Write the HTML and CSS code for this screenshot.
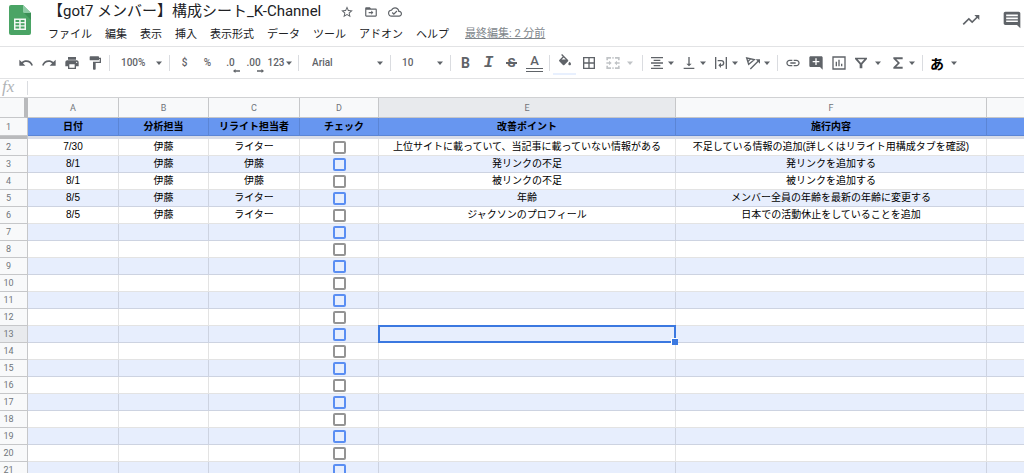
FILE: index.html
```html
<!DOCTYPE html>
<html lang="ja">
<head>
<meta charset="utf-8">
<meta name="viewport" content="width=device-width, initial-scale=1">
<title>【got7 メンバー】構成シート_K-Channel</title>
<link rel="stylesheet" href="styles.css">
</head>
<body>
<svg class="sprite" aria-hidden="true">
  <symbol id="arrow" viewBox="0 0 8 8"><path d="M1 2.5h6L4 6z"/></symbol>
  <symbol id="undo" viewBox="0 0 24 24"><path d="M12.5 8c-2.65 0-5.05.99-6.9 2.6L2 7v9h9l-3.62-3.62c1.39-1.16 3.16-1.88 5.12-1.88 3.54 0 6.55 2.31 7.6 5.5l2.37-.78C21.08 11.03 17.15 8 12.5 8z"/></symbol>
  <symbol id="redo" viewBox="0 0 24 24"><path d="M18.4 10.6C16.55 8.99 14.15 8 11.5 8c-4.65 0-8.58 3.03-9.96 7.22L3.9 16c1.05-3.19 4.05-5.5 7.6-5.5 1.95 0 3.73.72 5.12 1.88L13 16h9V7l-3.6 3.6z"/></symbol>
  <symbol id="print" viewBox="0 0 24 24"><path d="M19 8H5c-1.66 0-3 1.34-3 3v6h4v4h12v-4h4v-6c0-1.66-1.34-3-3-3zm-3 11H8v-5h8v5zm3-7c-.55 0-1-.45-1-1s.45-1 1-1 1 .45 1 1-.45 1-1 1zm-1-9H6v4h12V3z"/></symbol>
  <symbol id="paint" viewBox="0 0 24 24"><path d="M18 4V3c0-.55-.45-1-1-1H5c-.55 0-1 .45-1 1v4c0 .55.45 1 1 1h12c.55 0 1-.45 1-1V6h1v4H9v11c0 .55.45 1 1 1h2c.55 0 1-.45 1-1v-9h8V4h-3z"/></symbol>
  <symbol id="fill" viewBox="0 0 24 24"><path d="M16.56 8.94 7.62 0 6.21 1.41l2.38 2.38-5.15 5.15c-.59.59-.59 1.54 0 2.12l5.5 5.5c.29.29.68.44 1.06.44s.77-.15 1.06-.44l5.5-5.5c.59-.58.59-1.53 0-2.12zM6.8 8.4 10 5.21 13.200 8.400zM19 11.500s-2 2.170-2 3.500c0 1.100.9 2 2 2s2-.9 2-2c0-1.330-2-3.500-2-3.500z"/></symbol>
  <symbol id="borders" viewBox="0 0 24 24"><path d="M3 3v18h18V3H3zm8 16H5v-6h6v6zm0-8H5V5h6v6zm8 8h-6v-6h6v6zm0-8h-6V5h6v6z"/></symbol>
  <symbol id="merge" viewBox="0 0 24 24"><path d="M2 3h7v2.500H4.500V8H2zM15 3h7v5h-2.500V5.500H15zM2 16h2.500v2.500H9V21H2zM19.500 16H22v5h-7v-2.500h4.500zM2 11h4V8.500l4 3.500-4 3.500V13H2zM22 11h-4V8.500L14 12l4 3.500V13h4zM11 3h2v2.500h-2zM11 18.500h2V21h-2z"/></symbol>
  <symbol id="center" viewBox="0 0 24 24"><path d="M7 15v2h10v-2H7zm-4 6h18v-2H3v2zm0-8h18v-2H3v2zm4-6v2h10V7H7zM3 3v2h18V3H3z"/></symbol>
  <symbol id="bottom" viewBox="0 0 24 24"><path d="M16 13h-3V3h-2v10H8l4 4 4-4zM4 19v2h16v-2H4z"/></symbol>
  <symbol id="wrap" viewBox="0 0 24 24"><path d="M3 3h2v18H3zM19 3h2v18h-2zM7 7.500h5.500a4.500 4.500 0 0 1 0 9H12V19.500L8 15.500l4-4v3h.5a2.500 2.500 0 0 0 0-5H7z"/></symbol>
  <symbol id="rotate" viewBox="0 0 24 24"><g fill="none" stroke="currentColor" stroke-width="2"><path d="M2.500 4.500 14 7 5.500 14zM8.500 5.500 4.500 10M8 21 20 9"/></g><path d="M16 6.500h6.500V13z"/></symbol>
  <symbol id="link" viewBox="0 0 24 24"><path d="M3.900 12c0-1.710 1.390-3.100 3.100-3.100h4V7H7c-2.760 0-5 2.240-5 5s2.240 5 5 5h4v-1.900H7c-1.710 0-3.100-1.390-3.100-3.100zM8 13h8v-2H8v2zm9-6h-4v1.900h4c1.710 0 3.100 1.390 3.100 3.100s-1.390 3.100-3.100 3.100h-4V17h4c2.760 0 5-2.240 5-5s-2.240-5-5-5z"/></symbol>
  <symbol id="addnote" viewBox="0 0 24 24"><path d="M22 4c0-1.100-.9-2-2-2H4c-1.100 0-2 .9-2 2v12c0 1.100.9 2 2 2h14l4 4V4zm-5 7h-4v4h-2v-4H7V9h4V5h2v4h4v2z"/></symbol>
  <symbol id="chart" viewBox="0 0 24 24"><path fill-rule="evenodd" d="M2 2h20v20H2zm2 2v16h16V4zm3 6h2v7H7zm4-3h2v10h-2zm4 6h2v4h-2z"/></symbol>
  <symbol id="filter" viewBox="0 0 24 24"><path fill-rule="evenodd" d="M3 4h18v2l-7 8v6h-4v-6L3 6zm4 2.500 5 5.500 5-5.500z"/></symbol>
  <symbol id="sum" viewBox="0 0 24 24"><path d="M19 3.500H5v2.300l6.500 6.200L5 18.200v2.300h14v-3H9.500L15 12 9.500 6.500H19z"/></symbol>
  <symbol id="star" viewBox="0 0 24 24"><path d="m22 9.240-7.190-.62L12 2 9.190 8.630 2 9.240l5.460 4.730L5.820 21 12 17.270 18.180 21l-1.630-7.030L22 9.240zM12 15.400l-3.760 2.270 1-4.280-3.320-2.880 4.380-.38L12 6.100l1.710 4.040 4.380.38-3.320 2.880 1 4.280L12 15.400z"/></symbol>
  <symbol id="folder" viewBox="0 0 24 24"><path d="M20 6h-8l-2-2H4c-1.100 0-2 .9-2 2v12c0 1.100.9 2 2 2h16c1.100 0 2-.9 2-2V8c0-1.100-.9-2-2-2zm0 12H4V8h16v10zM12.500 9.500v2.500H8v2h4.500v2.500L16 13z"/></symbol>
  <symbol id="cloud" viewBox="0 0 24 24"><path d="M19.350 10.040A7.490 7.490 0 0 0 12 4C9.110 4 6.600 5.640 5.350 8.040A5.994 5.994 0 0 0 0 14c0 3.310 2.690 6 6 6h13c2.760 0 5-2.240 5-5 0-2.640-2.050-4.780-4.650-4.960zM19 18H6c-2.210 0-4-1.790-4-4 0-2.050 1.530-3.760 3.560-3.970l1.070-.11.500-.95A5.469 5.469 0 0 1 12 6c2.620 0 4.880 1.860 5.390 4.430l.3 1.500 1.530.11A2.980 2.980 0 0 1 22 15c0 1.650-1.350 3-3 3zm-9-3.820-2.090-2.090L6.500 13.500 10 17l6.010-6.010-1.410-1.410z"/></symbol>
  <symbol id="trend" viewBox="0 0 24 24"><path d="m16 6 2.290 2.290-4.880 4.880-4-4L2 16.590 3.410 18l6-6 4 4 6.300-6.290L22 12V6z"/></symbol>
  <symbol id="comments" viewBox="0 0 24 24"><path d="M22 4c0-1.100-.9-2-2-2H4c-1.100 0-2 .9-2 2v12c0 1.100.9 2 2 2h14l4 4V4zm-3 10.500H5v-2h14zm0-3.500H5V9h14zm0-3.500H5v-2h14z"/></symbol>
  <symbol id="left" viewBox="0 0 8 4"><path d="M0 2 2.500 0v1.200H7v1.600H2.500V4z"/></symbol>
  <symbol id="right" viewBox="0 0 8 4"><path d="M8 2 5.500 0v1.200H1v1.600h4.500V4z"/></symbol>
</svg>

<header class="top">
  <a class="logo" href="#" aria-label="スプレッドシート ホーム">
    <svg viewBox="0 0 22 30"><path fill="#4aa465" d="M2 0h12l8 8v20a2 2 0 0 1-2 2H2a2 2 0 0 1-2-2V2a2 2 0 0 1 2-2z"/><path fill="#8ecba5" d="M14 0l8 8h-6.500A1.500 1.500 0 0 1 14 6.500z"/><path fill="#3a8f55" d="M15 8h7v7z"/><path fill="#f2f8f3" fill-rule="evenodd" d="M5 13.500h12v11.500H5zm1.500 1.500v2h3.700v-2zm5.200 0v2h3.800v-2zm-5.200 3.300v2h3.700v-2zm5.200 0v2h3.800v-2zm-5.200 3.300v2h3.700v-2zm5.200 0v2h3.800v-2z"/></svg>
  </a>
  <div class="heading">
    <div class="title-row">
      <h1>【got7 メンバー】構成シート_K-Channel</h1>
      <div class="title-icons">
        <button aria-label="スター"><svg><use href="#star"/></svg></button>
        <button aria-label="移動"><svg><use href="#folder"/></svg></button>
        <button aria-label="ドキュメントのステータス"><svg><use href="#cloud"/></svg></button>
      </div>
    </div>
    <nav class="menus">
      <button>ファイル</button><button>編集</button><button>表示</button><button>挿入</button><button>表示形式</button><button>データ</button><button>ツール</button><button>アドオン</button><button>ヘルプ</button>
      <a href="#">最終編集: 2 分前</a>
    </nav>
  </div>
  <div class="top-right">
    <button aria-label="アクティビティ"><svg class="i20"><use href="#trend"/></svg></button>
    <button aria-label="コメント履歴"><svg class="i20"><use href="#comments"/></svg></button>
  </div>
</header>

<div class="toolbar" role="toolbar" aria-label="ツールバー">
  <button aria-label="元に戻す"><svg><use href="#undo"/></svg></button>
  <button aria-label="やり直し"><svg><use href="#redo"/></svg></button>
  <button aria-label="印刷"><svg><use href="#print"/></svg></button>
  <button aria-label="書式を貼り付け"><svg><use href="#paint"/></svg></button>
  <i class="sep"></i>
  <div class="pick"><select aria-label="ズーム"><option>100%</option></select><svg class="arrow"><use href="#arrow"/></svg></div>
  <i class="sep"></i>
  <button>$</button>
  <button>%</button>
  <button class="decimal" aria-label="小数点以下の桁数を減らす">.0<svg><use href="#left"/></svg></button>
  <button class="decimal" aria-label="小数点以下の桁数を増やす">.00<svg><use href="#right"/></svg></button>
  <button class="formats">123<svg class="arrow"><use href="#arrow"/></svg></button>
  <i class="sep"></i>
  <div class="pick pick-font"><select aria-label="フォント"><option>Arial</option></select><svg class="arrow"><use href="#arrow"/></svg></div>
  <i class="sep"></i>
  <div class="pick"><select aria-label="フォントサイズ"><option>10</option></select><svg class="arrow"><use href="#arrow"/></svg></div>
  <i class="sep"></i>
  <button class="bold" aria-label="太字">B</button>
  <button class="italic" aria-label="斜体">I</button>
  <button class="strike" aria-label="取り消し線">S</button>
  <button class="color" aria-label="テキストの色"><span>A</span></button>
  <i class="sep"></i>
  <button class="fill" aria-label="塗りつぶしの色"><svg><use href="#fill"/></svg></button>
  <button class="border-btn" aria-label="枠線"><svg><use href="#borders"/></svg></button>
  <button class="split wide faded" aria-label="セルを結合"><svg><use href="#merge"/></svg><svg class="arrow"><use href="#arrow"/></svg></button>
  <i class="sep"></i>
  <button class="split" aria-label="水平方向の配置"><svg><use href="#center"/></svg><svg class="arrow"><use href="#arrow"/></svg></button>
  <button class="split" aria-label="垂直方向の配置"><svg><use href="#bottom"/></svg><svg class="arrow"><use href="#arrow"/></svg></button>
  <button class="split" aria-label="テキストを折り返す"><svg><use href="#wrap"/></svg><svg class="arrow"><use href="#arrow"/></svg></button>
  <button class="split" aria-label="テキストの回転"><svg><use href="#rotate"/></svg><svg class="arrow"><use href="#arrow"/></svg></button>
  <i class="sep"></i>
  <button aria-label="リンクを挿入"><svg><use href="#link"/></svg></button>
  <button aria-label="コメントを挿入"><svg><use href="#addnote"/></svg></button>
  <button aria-label="グラフを挿入"><svg><use href="#chart"/></svg></button>
  <button class="split wide" aria-label="フィルタ"><svg><use href="#filter"/></svg><svg class="arrow"><use href="#arrow"/></svg></button>
  <button class="split" aria-label="関数"><svg><use href="#sum"/></svg><svg class="arrow"><use href="#arrow"/></svg></button>
  <i class="sep"></i>
  <button class="split wide ime" aria-label="入力ツール"><span>あ</span><svg class="arrow"><use href="#arrow"/></svg></button>
</div>

<div class="formula">
  <label for="fx">fx</label>
  <input id="fx" type="text">
</div>

<main class="sheet">
<table>
  <colgroup><col class="c-num"><col class="c-a"><col class="c-b"><col class="c-a"><col class="c-d"><col class="c-e"><col class="c-f"><col></colgroup>
  <thead>
    <tr><th class="corner"></th><th>A</th><th>B</th><th>C</th><th>D</th><th class="active">E</th><th>F</th><th></th></tr>
  </thead>
  <tbody>
    <tr class="names"><th>1</th><td>日付</td><td>分析担当</td><td>リライト担当者</td><td>　チェック</td><td>改善ポイント</td><td>施行内容</td><td></td></tr>
    <tr class="freeze"><th></th><td colspan="7"></td></tr>
    <tr><th>2</th><td>7/30</td><td>伊藤</td><td>ライター</td><td><input type="checkbox" aria-label="D2"></td><td>上位サイトに載っていて、当記事に載っていない情報がある</td><td>不足している情報の追加(詳しくはリライト用構成タブを確認)</td><td></td></tr>
    <tr class="band"><th>3</th><td>8/1</td><td>伊藤</td><td>伊藤</td><td><input type="checkbox" aria-label="D3"></td><td>発リンクの不足</td><td>発リンクを追加する</td><td></td></tr>
    <tr><th>4</th><td>8/1</td><td>伊藤</td><td>伊藤</td><td><input type="checkbox" aria-label="D4"></td><td>被リンクの不足</td><td>被リンクを追加する</td><td></td></tr>
    <tr class="band"><th>5</th><td>8/5</td><td>伊藤</td><td>ライター</td><td><input type="checkbox" aria-label="D5"></td><td>年齢</td><td>メンバー全員の年齢を最新の年齢に変更する</td><td></td></tr>
    <tr><th>6</th><td>8/5</td><td>伊藤</td><td>ライター</td><td><input type="checkbox" aria-label="D6"></td><td>ジャクソンのプロフィール</td><td>日本での活動休止をしていることを追加</td><td></td></tr>
    <tr class="band"><th>7</th><td></td><td></td><td></td><td><input type="checkbox" aria-label="D7"></td><td></td><td></td><td></td></tr>
    <tr><th>8</th><td></td><td></td><td></td><td><input type="checkbox" aria-label="D8"></td><td></td><td></td><td></td></tr>
    <tr class="band"><th>9</th><td></td><td></td><td></td><td><input type="checkbox" aria-label="D9"></td><td></td><td></td><td></td></tr>
    <tr><th>10</th><td></td><td></td><td></td><td><input type="checkbox" aria-label="D10"></td><td></td><td></td><td></td></tr>
    <tr class="band"><th>11</th><td></td><td></td><td></td><td><input type="checkbox" aria-label="D11"></td><td></td><td></td><td></td></tr>
    <tr><th>12</th><td></td><td></td><td></td><td><input type="checkbox" aria-label="D12"></td><td></td><td></td><td></td></tr>
    <tr class="band"><th class="active">13</th><td></td><td></td><td></td><td><input type="checkbox" aria-label="D13"></td><td class="selected"></td><td></td><td></td></tr>
    <tr><th>14</th><td></td><td></td><td></td><td><input type="checkbox" aria-label="D14"></td><td></td><td></td><td></td></tr>
    <tr class="band"><th>15</th><td></td><td></td><td></td><td><input type="checkbox" aria-label="D15"></td><td></td><td></td><td></td></tr>
    <tr><th>16</th><td></td><td></td><td></td><td><input type="checkbox" aria-label="D16"></td><td></td><td></td><td></td></tr>
    <tr class="band"><th>17</th><td></td><td></td><td></td><td><input type="checkbox" aria-label="D17"></td><td></td><td></td><td></td></tr>
    <tr><th>18</th><td></td><td></td><td></td><td><input type="checkbox" aria-label="D18"></td><td></td><td></td><td></td></tr>
    <tr class="band"><th>19</th><td></td><td></td><td></td><td><input type="checkbox" aria-label="D19"></td><td></td><td></td><td></td></tr>
    <tr><th>20</th><td></td><td></td><td></td><td><input type="checkbox" aria-label="D20"></td><td></td><td></td><td></td></tr>
    <tr class="band"><th>21</th><td></td><td></td><td></td><td><input type="checkbox" aria-label="D21"></td><td></td><td></td><td></td></tr>
  </tbody>
</table>
</main>
</body>
</html>
```

FILE: styles.css
```css
* { box-sizing: border-box; }

body {
  margin: 0;
  height: 100vh;
  display: flex;
  flex-direction: column;
  overflow: hidden;
  background: #fff;
  color: #5f6368;
  font-family: Roboto, "Noto Sans CJK JP", sans-serif;
}

button {
  margin: 0;
  padding: 0;
  border: 0;
  background: none;
  color: inherit;
  font: inherit;
  display: flex;
  align-items: center;
  justify-content: center;
}

svg { display: block; flex: none; fill: currentColor; }
.sprite { display: none; }

/* Header */
.top {
  flex: none;
  display: flex;
  height: 47px;
  border-bottom: 1px solid #e2e3e5;
}
.logo { padding: 5px 17px 0 9px; }
.logo svg { width: 22px; height: 30px; }
.heading { display: flex; flex-direction: column; gap: 3px; }
.title-row { display: flex; align-items: center; height: 23px; gap: 19px; }
h1 {
  margin: 0;
  font-size: 15px;
  font-weight: 400;
  line-height: 23px;
  color: #202124;
  white-space: nowrap;
}
.title-icons { display: flex; gap: 10px; }
.title-icons svg { width: 14px; height: 14px; }
.menus {
  display: flex;
  gap: 13px;
  font-size: 11px;
  line-height: 18px;
  color: #202124;
  white-space: nowrap;
}
.menus a { margin-left: 3px; color: #80868b; line-height: 16px; }
.top-right {
  display: flex;
  align-items: center;
  gap: 21px;
  margin-left: auto;
  padding: 0 2px 6px 0;
}
.i20 { width: 20px; height: 20px; }

/* Toolbar */
.toolbar {
  flex: none;
  display: flex;
  align-items: center;
  height: 32px;
  padding-left: 14px;
  border-bottom: 1px solid #e2e3e5;
  font-size: 10px;
  font-weight: 500;
}
.toolbar button { flex: none; width: 23px; height: 24px; }
.toolbar svg { width: 16px; height: 16px; }
.toolbar .arrow { width: 8px; height: 8px; }
.sep { flex: none; width: 1px; height: 16px; margin: 0 3px; background: #dadce0; }
.pick {
  flex: none;
  display: flex;
  align-items: center;
  width: 53px;
  padding: 0 3px 0 8px;
}
.pick-font { width: 85px; padding-left: 10px; }
.pick select {
  flex: 1;
  min-width: 0;
  padding: 0;
  border: 0;
  appearance: none;
  background: none;
  color: inherit;
  font: inherit;
}
.toolbar .decimal { position: relative; }
.decimal svg {
  position: absolute;
  right: 1px;
  bottom: 2px;
}
.toolbar .decimal svg { width: 8px; height: 4px; }
.toolbar .formats { width: 30px; }
.toolbar .bold { font-size: 14px; font-weight: 700; }
.toolbar .italic { font: italic bold 16px "Liberation Mono", monospace; }
.toolbar .strike { position: relative; font-size: 13px; font-weight: 700; }
.strike::after {
  content: "";
  position: absolute;
  top: 11px;
  left: 6px;
  right: 6px;
  height: 2px;
  background: #5f6368;
}
.color span {
  width: 17px;
  font-size: 13px;
  line-height: 14px;
  border-bottom: 4px double #5f6368;
}
.fill { border-bottom: 2px solid #e8f0fe; }
.toolbar .border-btn { width: 26px; }
.toolbar .split { width: 32px; justify-content: flex-start; padding-left: 3px; gap: 2px; }
.toolbar .wide { width: 37px; gap: 5px; }
.faded { color: #c0c3c6; }
.ime span { width: 16px; font-size: 14px; font-weight: 700; color: #000; }

/* Formula bar */
.formula {
  flex: none;
  display: flex;
  height: 19px;
  border-bottom: 1px solid #d0d1d3;
}
.formula label {
  width: 27px;
  padding-left: 2px;
  font: italic 17px/16px "Liberation Serif", serif;
  color: #b0b3b6;
}
.formula input {
  flex: 1;
  margin: 2px 0;
  padding: 0 6px;
  border: 0;
  border-left: 1px solid #dadce0;
  outline: 0;
  font: 10px/14px "Liberation Sans", sans-serif;
}

/* Grid */
.sheet { flex: 1; min-height: 0; overflow: hidden; }
table {
  width: 100%;
  table-layout: fixed;
  border-collapse: separate;
  border-spacing: 0;
}
.c-num { width: 28px; }
.c-a { width: 91px; }
.c-b { width: 90px; }
.c-d { width: 79px; }
.c-e { width: 297px; }
.c-f { width: 311px; }

th, td {
  height: 17px;
  padding: 0;
  border: 0 solid rgba(0, 0, 0, 0.11);
  border-width: 0 1px 1px 0;
  line-height: 16px;
  text-align: center;
  vertical-align: middle;
  white-space: nowrap;
}
th {
  background: #f8f9fa;
  border-color: #c6c7c9;
  color: #70757a;
  font-size: 9px;
  font-weight: 400;
}
thead th { height: 20px; }
tbody th { padding-right: 10px; }
th:last-child, td:last-child { border-right: 0; }
tbody th:first-child { border-right: 1px solid #c6c7c9; }
td {
  color: #000;
  font-family: "Liberation Sans", "Noto Sans CJK JP", sans-serif;
  font-size: 10px;
}
.corner { border-right: 4px solid #b9babc; }
.active { background: #e8eaed; }
.band td { background: #e7eefd; }
.names th, .names td { height: 18px; }
.names td { background: #6796f0; font-weight: 700; }
.freeze th, .freeze td {
  height: 3px;
  border: 0;
  background: #d9dde8;
  line-height: 0;
}
.freeze th { background: #b9babc; }

td input {
  display: block;
  width: 13px;
  height: 13px;
  margin: 0 auto;
  appearance: none;
  border: 2px solid #949494;
  border-radius: 2px;
}
.band input { border-color: #5a8ef3; }

.selected { position: relative; }
.selected::before {
  content: "";
  position: absolute;
  inset: -1px;
  border: 2px solid #3b78e0;
}
.selected::after {
  content: "";
  position: absolute;
  right: -3px;
  bottom: -3px;
  width: 6px;
  height: 6px;
  border: 1px solid #fff;
  border-width: 1px 0 0 1px;
  background: #3b78e0;
}
```
